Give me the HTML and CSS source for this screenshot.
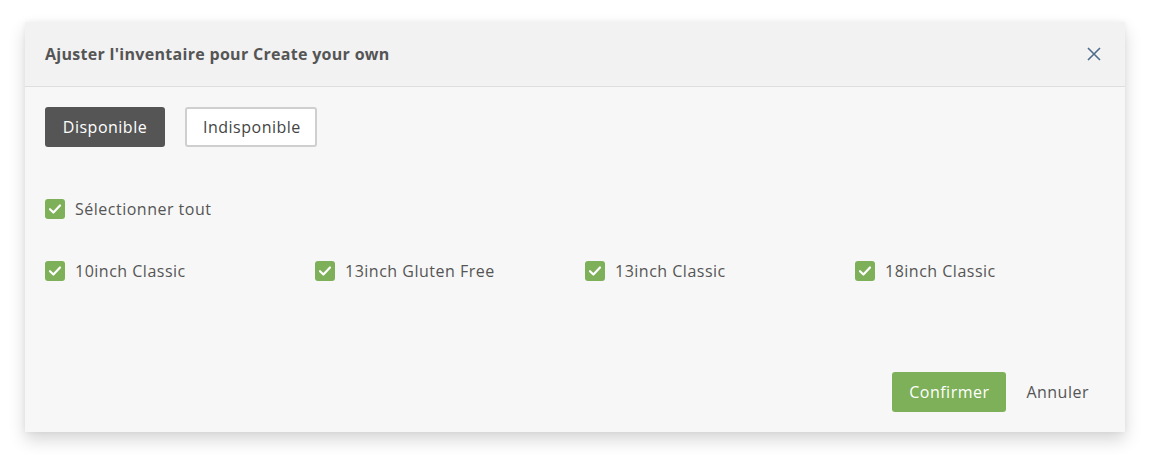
FILE: index.html
```html
<!DOCTYPE html>
<html lang="fr">
<head>
<meta charset="utf-8">
<link rel="stylesheet" href="styles.css">
</head>
<body>
<div class="modal">
  <div class="modal-header">
    <h2 class="title">Ajuster l'inventaire pour Create your own</h2>
    <button class="close" aria-label="Fermer">
      <svg width="14" height="14" viewBox="0 0 14 14"><path d="M1 1L13 13M13 1L1 13" stroke="#4e6b8c" stroke-width="1.6" fill="none"/></svg>
    </button>
  </div>
  <div class="modal-body">
    <div class="toggle">
      <button class="btn btn-dark">Disponible</button>
      <button class="btn btn-outline">Indisponible</button>
    </div>
    <label class="check select-all"><span class="box"><svg width="20" height="20" viewBox="0 0 20 20"><path d="M5 10.2L8.4 13.5L15 6.5" stroke="#fff" stroke-width="2.2" fill="none" stroke-linecap="round" stroke-linejoin="round"/></svg></span>Sélectionner tout</label>
    <div class="grid">
      <label class="check"><span class="box"><svg width="20" height="20" viewBox="0 0 20 20"><path d="M5 10.2L8.4 13.5L15 6.5" stroke="#fff" stroke-width="2.2" fill="none" stroke-linecap="round" stroke-linejoin="round"/></svg></span>10inch Classic</label>
      <label class="check"><span class="box"><svg width="20" height="20" viewBox="0 0 20 20"><path d="M5 10.2L8.4 13.5L15 6.5" stroke="#fff" stroke-width="2.2" fill="none" stroke-linecap="round" stroke-linejoin="round"/></svg></span>13inch Gluten Free</label>
      <label class="check"><span class="box"><svg width="20" height="20" viewBox="0 0 20 20"><path d="M5 10.2L8.4 13.5L15 6.5" stroke="#fff" stroke-width="2.2" fill="none" stroke-linecap="round" stroke-linejoin="round"/></svg></span>13inch Classic</label>
      <label class="check"><span class="box"><svg width="20" height="20" viewBox="0 0 20 20"><path d="M5 10.2L8.4 13.5L15 6.5" stroke="#fff" stroke-width="2.2" fill="none" stroke-linecap="round" stroke-linejoin="round"/></svg></span>18inch Classic</label>
    </div>
  </div>
  <div class="modal-footer">
    <button class="btn btn-green">Confirmer</button>
    <button class="btn btn-link">Annuler</button>
  </div>
</div>
</body>
</html>
```
FILE: styles.css
```css
* { box-sizing: border-box; }
html, body { margin: 0; padding: 0; background: #fff; }
body {
  font-family: "Open Sans", "Noto Sans", sans-serif;
  color: #555;
  padding: 22px 24px 30px 25px;
}
.modal {
  width: 1100px;
  height: 410px;
  background: #f7f7f7;
  box-shadow: 0 8px 16px rgba(0,0,0,0.16), 0 0 6px rgba(0,0,0,0.05);
  display: flex;
  flex-direction: column;
}
.modal-header {
  height: 65px;
  background: #f2f2f2;
  border-bottom: 1px solid #dedede;
  display: flex;
  align-items: center;
  justify-content: space-between;
  padding: 0 24px 0 20px;
}
.title {
  margin: 0;
  font-size: 16px;
  font-weight: 700;
  color: #555;
  letter-spacing: 0.3px;
}
.close {
  background: none;
  border: 0;
  padding: 0;
  width: 14px;
  height: 14px;
  display: flex;
  cursor: pointer;
}
.modal-body {
  padding: 20px 20px 0 20px;
  flex: 1;
}
.toggle { display: flex; gap: 20px; }
.btn {
  font-family: inherit;
  font-size: 16px;
  letter-spacing: 0.5px;
  height: 40px;
  border-radius: 3px;
  padding: 0 16px;
  cursor: pointer;
}
.btn-dark {
  background: #555;
  color: #fff;
  border: 0;
  width: 120px;
}
.btn-outline {
  background: #fff;
  color: #444;
  border: 2px solid #cfcfcf;
  width: 132px;
}
.check {
  display: flex;
  align-items: center;
  gap: 10px;
  font-size: 16px;
  letter-spacing: 0.5px;
  color: #555;
}
.box {
  width: 20px;
  height: 20px;
  border-radius: 3px;
  background: #7db058;
  display: flex;
  flex: none;
}
.select-all { margin-top: 52px; height: 20px; }
.grid {
  display: grid;
  grid-template-columns: repeat(4, 270px);
  margin-top: 42px;
}
.grid .check { height: 20px; }
.modal-footer {
  display: flex;
  justify-content: flex-end;
  align-items: center;
  gap: 4px;
  padding: 0 20px 20px 0;
}
.btn-green {
  background: #7db058;
  color: #fff;
  border: 0;
  width: 114px;
}
.btn-link {
  background: none;
  border: 0;
  color: #555;
}
```
